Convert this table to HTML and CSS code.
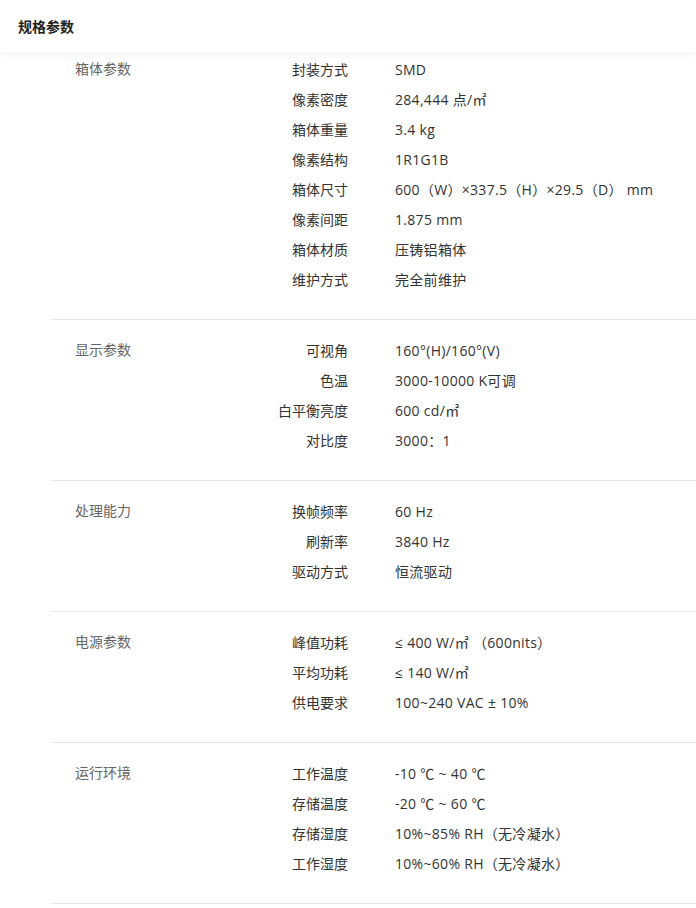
FILE: index.html
```html
<!DOCTYPE html>
<html lang="zh">
<head>
<meta charset="utf-8">
<link rel="stylesheet" href="styles.css">
</head>
<body>
<header class="top"><h1 class="title">规格参数</h1></header>
<main class="specs">
  <section class="group">
    <div class="cat">箱体参数</div>
    <dl class="rows">
      <dt>封装方式</dt><dd>SMD</dd>
      <dt>像素密度</dt><dd>284,444 点/㎡</dd>
      <dt>箱体重量</dt><dd>3.4 kg</dd>
      <dt>像素结构</dt><dd>1R1G1B</dd>
      <dt>箱体尺寸</dt><dd>600（W）×337.5（H）×29.5（D） mm</dd>
      <dt>像素间距</dt><dd>1.875 mm</dd>
      <dt>箱体材质</dt><dd>压铸铝箱体</dd>
      <dt>维护方式</dt><dd>完全前维护</dd>
    </dl>
  </section>
  <section class="group">
    <div class="cat">显示参数</div>
    <dl class="rows">
      <dt>可视角</dt><dd>160°(H)/160°(V)</dd>
      <dt>色温</dt><dd>3000-10000 K可调</dd>
      <dt>白平衡亮度</dt><dd>600 cd/㎡</dd>
      <dt>对比度</dt><dd>3000：1</dd>
    </dl>
  </section>
  <section class="group">
    <div class="cat">处理能力</div>
    <dl class="rows">
      <dt>换帧频率</dt><dd>60 Hz</dd>
      <dt>刷新率</dt><dd>3840 Hz</dd>
      <dt>驱动方式</dt><dd>恒流驱动</dd>
    </dl>
  </section>
  <section class="group">
    <div class="cat">电源参数</div>
    <dl class="rows">
      <dt>峰值功耗</dt><dd>≤ 400 W/㎡ （600nits）</dd>
      <dt>平均功耗</dt><dd>≤ 140 W/㎡</dd>
      <dt>供电要求</dt><dd>100~240 VAC ± 10%</dd>
    </dl>
  </section>
  <section class="group">
    <div class="cat">运行环境</div>
    <dl class="rows">
      <dt>工作温度</dt><dd>-10 ℃ ~ 40 ℃</dd>
      <dt>存储温度</dt><dd>-20 ℃ ~ 60 ℃</dd>
      <dt>存储湿度</dt><dd>10%~85% RH（无冷凝水）</dd>
      <dt>工作湿度</dt><dd>10%~60% RH（无冷凝水）</dd>
    </dl>
  </section>
</main>
</body>
</html>
```

FILE: styles.css
```css
* { box-sizing: border-box; }
html, body { margin: 0; padding: 0; background: #fff; }
body {
  font-family: "Open Sans", "Noto Sans CJK SC", sans-serif;
  color: #333;
  font-size: 14px;
  overflow: hidden;
}
.top {
  height: 52px;
  display: flex;
  align-items: center;
  padding-left: 18px;
  background: #fff;
  box-shadow: 0 2px 8px rgba(0, 0, 0, 0.06);
  position: relative;
  z-index: 1;
}
.title {
  margin: 0;
  font-size: 14px;
  font-weight: 700;
  color: #222;
}
.specs {
  margin-left: 51px;
}
.group {
  display: flex;
  padding: 15px 0 25px 24px;
  border-bottom: 1px solid #e8e8e8;
}
.group:first-child { padding-top: 2px; }
.cat {
  width: 150px;
  line-height: 30px;
  color: #666;
  font-size: 14px;
}
.rows {
  margin: 0;
  display: grid;
  grid-template-columns: 123px auto;
  column-gap: 47px;
  grid-auto-rows: 30px;
  align-items: center;
}
.rows dt {
  text-align: right;
  color: #333;
  white-space: nowrap;
}
.rows dd {
  margin: 0;
  color: #333;
  white-space: nowrap;
  letter-spacing: 0.3px;
}
```
